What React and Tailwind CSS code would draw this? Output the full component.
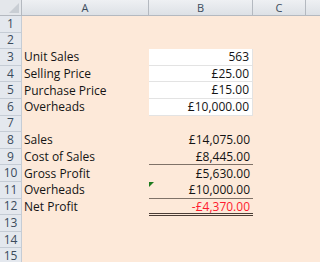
const COLS = ['A', 'B', 'C'];

// row label, value, extra styling for the B cell
const ROWS = [
  { n: 1 },
  { n: 2 },
  { n: 3, label: 'Unit Sales', value: '563', input: true },
  { n: 4, label: 'Selling Price', value: '£25.00', input: true },
  { n: 5, label: 'Purchase Price', value: '£15.00', input: true },
  { n: 6, label: 'Overheads', value: '£10,000.00', input: true },
  { n: 7 },
  { n: 8, label: 'Sales', value: '£14,075.00' },
  { n: 9, label: 'Cost of Sales', value: '£8,445.00', border: 'single' },
  { n: 10, label: 'Gross Profit', value: '£5,630.00' },
  { n: 11, label: 'Overheads', value: '£10,000.00', border: 'single', flag: true },
  { n: 12, label: 'Net Profit', value: '-£4,370.00', border: 'double', negative: true },
  { n: 13 },
  { n: 14 },
  { n: 15 },
];

function ValueCell({ row }) {
  const bg = row.input ? 'bg-white border-b border-r border-[#e3e3e3]' : '';
  return (
    <div className={`relative flex items-center justify-end pr-[3px] ${bg}`}>
      {row.flag && (
        <svg className="absolute left-0 top-0" width="5" height="5" viewBox="0 0 5 5">
          <path d="M0 0H5L0 5Z" fill="#1e7b1e" />
        </svg>
      )}
      {row.value && (
        <span className={row.negative ? 'text-[#ff1a2e]' : 'text-[#141414]'}>{row.value}</span>
      )}
      {row.border === 'single' && <div className="absolute left-0 right-0 bottom-0 h-px bg-[#7f7268]" />}
      {row.border === 'double' && (
        <div className="absolute left-0 right-0 bottom-[-1px] h-[3px] border-y border-[#4a3d36]" />
      )}
    </div>
  );
}

export default function App() {
  return (
    <div
      className="w-[320px] h-[262px] overflow-hidden bg-[#fde9d9] text-[12px] leading-none"
      style={{ fontFamily: '"Open Sans", "Liberation Sans", sans-serif' }}
    >
      <div className="grid grid-cols-[22px_127px_104px_53px_1fr] grid-rows-[16px]">
        <div className="relative bg-[#e4e7eb] border-r border-b border-[#b4b9c0]">
          <svg className="absolute right-[2px] bottom-[2px]" width="10" height="10" viewBox="0 0 10 10">
            <path d="M10 0V10H0Z" fill="#c9ced4" />
          </svg>
        </div>
        {COLS.map((c) => (
          <div
            key={c}
            className="flex items-center justify-center bg-gradient-to-b from-[#eef0f3] to-[#dde1e6] border-r border-b border-[#b4b9c0] text-[11px] text-[#3b4b5c]"
          >
            {c}
          </div>
        ))}
        <div className="bg-gradient-to-b from-[#eef0f3] to-[#dde1e6] border-b border-[#b4b9c0]" />
      </div>

      {ROWS.map((row) => (
        <div key={row.n} className="grid grid-cols-[22px_127px_104px_53px_1fr] h-[16.6px]">
          <div className="flex items-center justify-center bg-[#e4e8ee] border-r border-b border-[#c5ccd5] text-[12px] text-[#3b4b5c]">
            {row.n}
          </div>
          <div className="flex items-center pl-[2px] text-[#141414]">{row.label}</div>
          <ValueCell row={row} />
          <div />
          <div />
        </div>
      ))}
    </div>
  );
}
